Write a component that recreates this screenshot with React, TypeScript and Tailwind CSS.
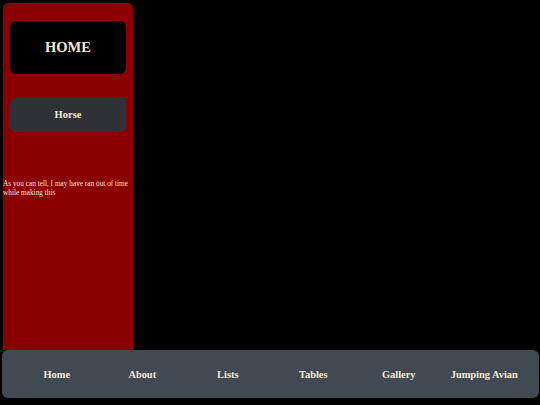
export default function App() {
  const links = ["Home", "About", "Lists", "Tables", "Gallery", "Jumping Avian"]
  return (
    <div className="h-[405px] w-[540px] bg-black flex flex-col overflow-hidden font-['Liberation_Serif',serif] text-[#f3e9d6]">
      <div className="flex-1 flex min-h-0 pt-[3px] pl-[3px]">
        <aside className="w-[130px] bg-[#8b0000] rounded-t-[5px] flex flex-col">
          <div className="mx-[7px] mt-[18px] h-[53px] bg-black rounded-[6px] flex items-center justify-center">
            <h1 className="text-[14.5px] font-bold">HOME</h1>
          </div>
          <div className="mx-[7px] mt-[24px] h-[34px] bg-[#2e3136] rounded-[5px] flex items-center justify-center">
            <span className="text-[10.5px] font-bold">Horse</span>
          </div>
          <p className="mt-[48px] text-[7.3px] leading-[8.5px] pr-[1px]">
            As you can tell, I may have ran out of time while making this
          </p>
        </aside>
      </div>
      <nav className="h-[48px] ml-[2px] mr-[1px] mb-[7px] bg-[#414a53] rounded-[6px] flex items-center pt-[1px] px-[12px]">
        {links.map((l) => (
          <a key={l} className="flex-1 text-center text-[10.4px] font-bold">
            {l}
          </a>
        ))}
      </nav>
    </div>
  )
}
